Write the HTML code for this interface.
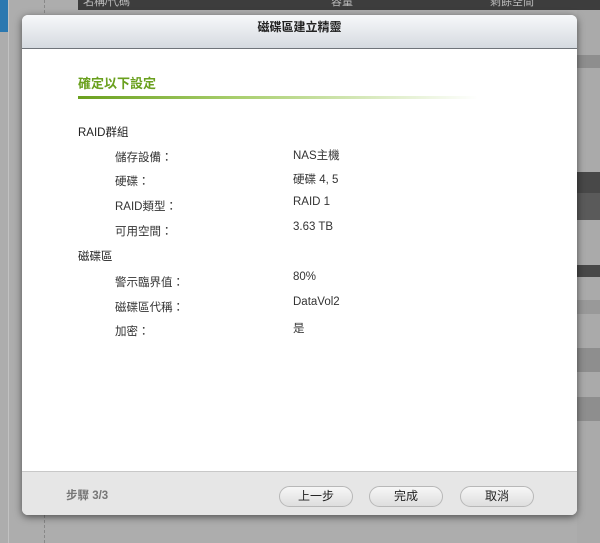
<!DOCTYPE html>
<html><head><meta charset="utf-8"><style>
*{margin:0;padding:0;box-sizing:border-box}
body{width:600px;height:543px;overflow:hidden;background:#adadad;position:relative;font-family:"Liberation Sans","Noto Sans CJK TC",sans-serif;font-size:12px;color:#333}
.a{position:absolute}
.dlg{left:22px;top:15px;width:555px;height:500px;background:#fff;border-radius:6px;box-shadow:0 2px 8px rgba(0,0,0,.55);overflow:hidden}
.hd{height:34px;background:linear-gradient(#f7f8fa,#d5dae0);border-bottom:1px solid #6f747a;text-align:center;line-height:24px;font-size:12px;color:#222;font-weight:bold}
.ft{left:0;top:456px;width:555px;height:44px;background:#e6e6e6;border-top:1px solid #c8c8c8}
.btn{top:14px;width:74px;height:21px;border:1px solid #b8b8b8;border-radius:11px;background:linear-gradient(#f7f7f7,#dedede);text-align:center;line-height:19px;font-size:12px;color:#222}
.l{left:93px}.v{left:271px}
.r{font-size:11.5px}
</style></head><body>
<div class="a" style="left:0;top:0;width:8px;height:32px;background:#2b78b0"></div>
<div class="a" style="left:8px;top:0;width:1px;height:543px;background:#c2c2c2"></div>
<div class="a" style="left:44px;top:0;height:543px;border-left:1px dashed #888"></div>
<div class="a" style="left:78px;top:0;width:522px;height:10px;background:#3d3d3d;color:#bbb;font-size:11px;line-height:4px"><span style="margin-left:5px">名稱/代碼</span><span style="position:absolute;left:253px">容量</span><span style="position:absolute;left:412px">剩餘空間</span></div>
<div class="a" style="left:577px;top:10px;width:23px;height:533px;background:#aaa"></div>
<div class="a" style="left:577px;top:55px;width:23px;height:13px;background:#8e8e8e"></div>
<div class="a" style="left:577px;top:172px;width:23px;height:21px;background:#484848"></div>
<div class="a" style="left:577px;top:193px;width:23px;height:27px;background:#5a5a5a"></div>
<div class="a" style="left:577px;top:265px;width:23px;height:12px;background:#484848"></div>
<div class="a" style="left:577px;top:300px;width:23px;height:14px;background:#999"></div>
<div class="a" style="left:577px;top:348px;width:23px;height:24px;background:#8e8e8e"></div>
<div class="a" style="left:577px;top:397px;width:23px;height:24px;background:#8e8e8e"></div>
<div class="dlg a">
<div class="hd">磁碟區建立精靈</div>
<div class="a" style="left:56px;top:58px;color:#6aa01e;font-size:13px;font-weight:bold">確定以下設定</div>
<div class="a" style="left:56px;top:81px;width:400px;height:3px;background:linear-gradient(90deg,#6aa01e,#a9cf6e 40%,rgba(255,255,255,0))"></div>
<div class="a r" style="left:56px;top:109px;color:#222">RAID群組</div>
<div class="a r l" style="top:134px">儲存設備：</div><div class="a r v" style="top:132px">NAS主機</div>
<div class="a r l" style="top:158px">硬碟：</div><div class="a r v" style="top:156px">硬碟 4, 5</div>
<div class="a r l" style="top:183px">RAID類型：</div><div class="a r v" style="top:181px">RAID 1</div>
<div class="a r l" style="top:208px">可用空間：</div><div class="a r v" style="top:206px">3.63 TB</div>
<div class="a r" style="left:56px;top:233px;color:#222">磁碟區</div>
<div class="a r l" style="top:259px">警示臨界值：</div><div class="a r v" style="top:256px">80%</div>
<div class="a r l" style="top:284px">磁碟區代稱：</div><div class="a r v" style="top:281px">DataVol2</div>
<div class="a r l" style="top:308px">加密：</div><div class="a r v" style="top:305px">是</div>
<div class="a ft">
<div class="a" style="left:44px;top:15px;color:#777;font-weight:bold;font-size:11.5px">步驟 3/3</div>
<div class="a btn" style="left:257px">上一步</div>
<div class="a btn" style="left:347px">完成</div>
<div class="a btn" style="left:438px">取消</div>
</div>
</div>
</body></html>
